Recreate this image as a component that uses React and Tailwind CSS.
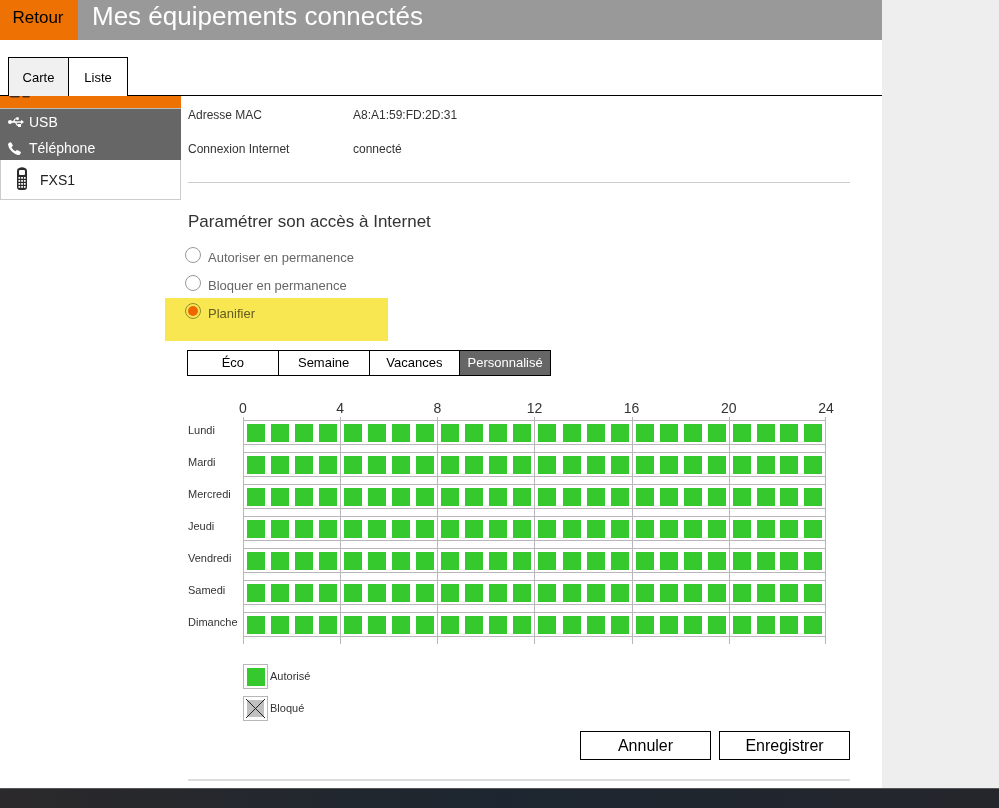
import { useState } from 'react'

const DAYS = ['Lundi', 'Mardi', 'Mercredi', 'Jeudi', 'Vendredi', 'Samedi', 'Dimanche'];
const BLOCKS = [0, 4, 8, 12, 16, 20];
const PROFILES = ['Éco', 'Semaine', 'Vacances', 'Personnalisé'];
const ACCESS_MODES = ['Autoriser en permanence', 'Bloquer en permanence', 'Planifier'];

function Header(){
  return(
    <header className="flex h-10 bg-[#999999]">
      <button className="w-[78px] bg-[#ee7203] pr-[2px] pb-1 text-[17px] text-black cursor-pointer">Retour</button>
      <h1 className="ml-[14px] text-[26px] leading-8 text-white">Mes équipements connectés</h1>
    </header>
  );
}

function ViewTabs(){
  const [view, setView] = useState('Carte');

  return(
    <nav className="mt-[17px] flex">
      <div className="w-2 border-b border-black" />
      {['Carte', 'Liste'].map(name => (
        <button key={name} onClick={() => setView(name)}
          className={`h-[39px] border-t border-l border-black pt-[2px] text-[13px] text-black cursor-pointer last-of-type:border-r w-[60px] ${view === name ? 'bg-[#f0f0f0]' : 'bg-white'}`}
          >{name}
        </button>
      ))}
      <div className="grow border-b border-black" />
    </nav>
  );
}

function UsbIcon(){
  return(
    <svg className="mr-[5px] ml-2 h-[10px] w-4" viewBox="0 0 16 10" fill="none" stroke="currentColor" aria-hidden="true">
      <circle cx="2" cy="5" r="2" fill="currentColor" stroke="none" />
      <path d="M13 2.800v4.400L16 5z" fill="currentColor" stroke="none" />
      <path d="M2 5h12" strokeWidth="1.500" />
      <path d="M4.500 5Q6 4.500 6.500 3T8.500 1.500H9M6.500 5Q8 5.500 8.500 7T10.500 8.500H11" strokeWidth="1.200" />
      <circle cx="9.500" cy="1.500" r="1.500" fill="currentColor" stroke="none" />
      <rect x="10" y="7" width="3" height="3" fill="currentColor" stroke="none" />
    </svg>
  );
}

function PhoneIcon(){
  return(
    <svg className="mr-2 ml-2 size-[13px]" viewBox="0 0 13 13" fill="currentColor" aria-hidden="true">
      <path d="M.6 1.200L2.200.2Q3 0 3.400.7L4.800 3.200Q5 3.900 4.500 4.300L3.400 5.200Q4.600 7.900 7.600 9.300L8.600 8.300Q9.100 7.900 9.700 8.200L12.500 9.800Q13.100 10.200 12.800 10.900L12.100 12.200Q11.700 12.900 10.800 13Q7.300 13 3.600 9.300Q.2 5.700 0 2.500Q0 1.700.6 1.200z" />
    </svg>
  );
}

function HandsetIcon(){
  return(
    <svg className="h-[23px] w-3" viewBox="0 0 12 23" aria-hidden="true">
      <path d="M3 1Q6-.6 9 1q2 .5 2 3v16q0 3-3 3H4q-3 0-3-3V4q0-2.500 2-3z" fill="#2a2a2a" />
      <rect x="3" y="3" width="6" height="5" rx="1" fill="#fff" />
      {[10, 13, 16, 19].map(y => [2.5, 5.2, 7.9].map(x => (
        <rect key={`${x}-${y}`} x={x} y={y} width="1.7" height="1.8" fill="#fff" />
      )))}
    </svg>
  );
}

function Sidebar(){
  return(
    <aside className="w-[181px] shrink-0 self-start text-[14px]">
      <div className="h-3 bg-[#ee7203]">
        <svg className="ml-2 h-[2px] w-6" viewBox="0 0 24 2" aria-hidden="true">
          <path d="M1 0h11l-1 1.500H3zM14 0h8l-1 1.500h-6z" fill="#4a2a12" />
        </svg>
      </div>
      <div className="border-t border-[#bbbbbb] bg-[#666666] text-white">
        <a href="#usb" className="flex h-[26px] items-center">
          <UsbIcon />USB
        </a>
        <a href="#telephone" className="flex h-[25px] items-center pt-px">
          <PhoneIcon />Téléphone
        </a>
      </div>
      <a href="#fxs1" className="flex h-10 items-center border border-t-0 border-[#cccccc] pt-px text-[#222222]">
        <span className="ml-[15px] mr-3 pb-1"><HandsetIcon /></span>FXS1
      </a>
    </aside>
  );
}

function DeviceInfo(){
  return(
    <dl className="grid grid-cols-[165px_1fr] pt-[2px] text-[12px] leading-[34px] text-[#333333]">
      <dt>Adresse MAC</dt>
      <dd>A8:A1:59:FD:2D:31</dd>
      <dt>Connexion Internet</dt>
      <dd>connecté</dd>
    </dl>
  );
}

function AccessModes(){
  const [mode, setMode] = useState('Planifier');

  return(
    <fieldset className="relative mt-[9px] -ml-[3px]">
      {ACCESS_MODES.map(name => (
        <label key={name} className="flex h-7 items-start gap-[7px] text-[13px] leading-[30px] text-[#666666]">
          <input type="radio" name="access" checked={mode === name} onChange={() => setMode(name)}
            className="mt-1 size-4 appearance-none rounded-full border border-[#999999] bg-white bg-clip-content p-[2px] checked:bg-[#f57000]"
          />
          {name}
        </label>
      ))}
      <div className="pointer-events-none absolute top-[55px] -left-5 h-[43px] w-[223px] bg-[#f9e752] mix-blend-multiply" />
    </fieldset>
  );
}

function ProfileTabs(){
  const [profile, setProfile] = useState('Personnalisé');

  return(
    <div className="mt-[23px] -ml-px flex w-[364px] border-r border-black">
      {PROFILES.map(name => (
        <button key={name} onClick={() => setProfile(name)}
          className={`h-[26px] flex-1 border-y border-l border-black text-[13px] cursor-pointer ${profile === name ? 'bg-[#666666] text-white' : 'bg-white text-black'}`}
          >{name}
        </button>
      ))}
    </div>
  );
}

function HourCells({day, start, blocked, toggle}){
  return(
    <div className="mb-[7px] flex h-[25px] items-center justify-between border-y border-[#bbb4bb] px-[3px]">
      {[0, 1, 2, 3].map(offset => {
        const id = `${day} ${start + offset}h`;
        return(
          <button key={id} aria-label={id} aria-pressed={!blocked.includes(id)} onClick={() => toggle(id)}
            className={`size-[18px] cursor-pointer ${blocked.includes(id) ? 'bg-[#bfbfbf]' : 'bg-[#36c92e]'}`}
          />
        );
      })}
    </div>
  );
}

function Schedule(){
  const [blocked, setBlocked] = useState([]);

  function toggle(id){
    setBlocked(prev => prev.includes(id) ? prev.filter(item => item !== id) : [...prev, id]);
  }

  return(
    <div className="mt-[23px] pr-6">
      <table className="w-full table-fixed border-separate border-spacing-0 text-[#333333]">
        <thead>
          <tr>
            <td className="w-[55px] p-0" />
            {BLOCKS.map(hour => (
              <th key={hour} scope="col" className="p-0 text-[14px] leading-[18px] font-normal">
                <div className="flex justify-between">
                  <span className="-translate-x-1/2">{hour}</span>
                  {hour === 20 && <span className="translate-x-1/2">24</span>}
                </div>
              </th>
            ))}
          </tr>
          <tr>
            <td className="h-[3px] p-0" />
            {BLOCKS.map(hour => <td key={hour} className="border-l border-[#bbb4bb] p-0 last:border-r" />)}
          </tr>
        </thead>
        <tbody>
          {DAYS.map(day => (
            <tr key={day}>
              <th scope="row" className="p-0 text-left align-top text-[11px] leading-[21px] font-normal">{day}</th>
              {BLOCKS.map(start => (
                <td key={start} className="border-l border-[#bbb4bb] p-0 last:border-r">
                  <HourCells day={day} start={start} blocked={blocked} toggle={toggle} />
                </td>
              ))}
            </tr>
          ))}
        </tbody>
      </table>
    </div>
  );
}

function Legend(){
  return(
    <ul className="mt-5 ml-[55px] flex flex-col gap-[7px] text-[11px] text-[#333333]">
      <li className="flex items-center gap-[2px]">
        <span className="flex size-[25px] items-center justify-center border border-[#bbb4bb]">
          <span className="size-[18px] bg-[#36c92e]" />
        </span>
        Autorisé
      </li>
      <li className="flex items-center gap-[2px]">
        <span className="flex size-[25px] items-center justify-center border border-[#bbb4bb]">
          <svg className="size-[19px]" viewBox="0 0 19 19" aria-hidden="true">
            <rect x="1" y="1" width="17" height="17" fill="#c0c0c0" />
            <path d="M0 0l19 19M19 0L0 19" stroke="#222" />
          </svg>
        </span>
        Bloqué
      </li>
    </ul>
  );
}

function App(){
  return(
    <div className="flex min-h-screen flex-col bg-[#eeeeee] font-['Liberation_Sans',Arial,sans-serif]">
      <div className="mr-[117px] flex grow flex-col bg-white">
        <Header />
        <ViewTabs />
        <div className="flex grow">
          <Sidebar />
          <main className="grow pr-8 pl-[7px]">
            <DeviceInfo />
            <hr className="mt-4 border-[#cccccc]" />
            <h2 className="mt-[27px] text-[17px] leading-6 text-[#333333]">Paramétrer son accès à Internet</h2>
            <AccessModes />
            <ProfileTabs />
            <Schedule />
            <Legend />
            <div className="mt-[10px] flex justify-end gap-2 text-[16px] text-black">
              <button className="h-[29px] w-[131px] border border-black bg-white cursor-pointer">Annuler</button>
              <button className="h-[29px] w-[131px] border border-black bg-white cursor-pointer">Enregistrer</button>
            </div>
            <hr className="mt-[19px] border-t-2 border-[#dddddd]" />
          </main>
        </div>
      </div>
      <footer className="h-5 border-t border-[#555555] bg-linear-to-r from-[#2b292b] via-[#1d2630] to-[#25262c]" />
    </div>
  );
}

export default App
